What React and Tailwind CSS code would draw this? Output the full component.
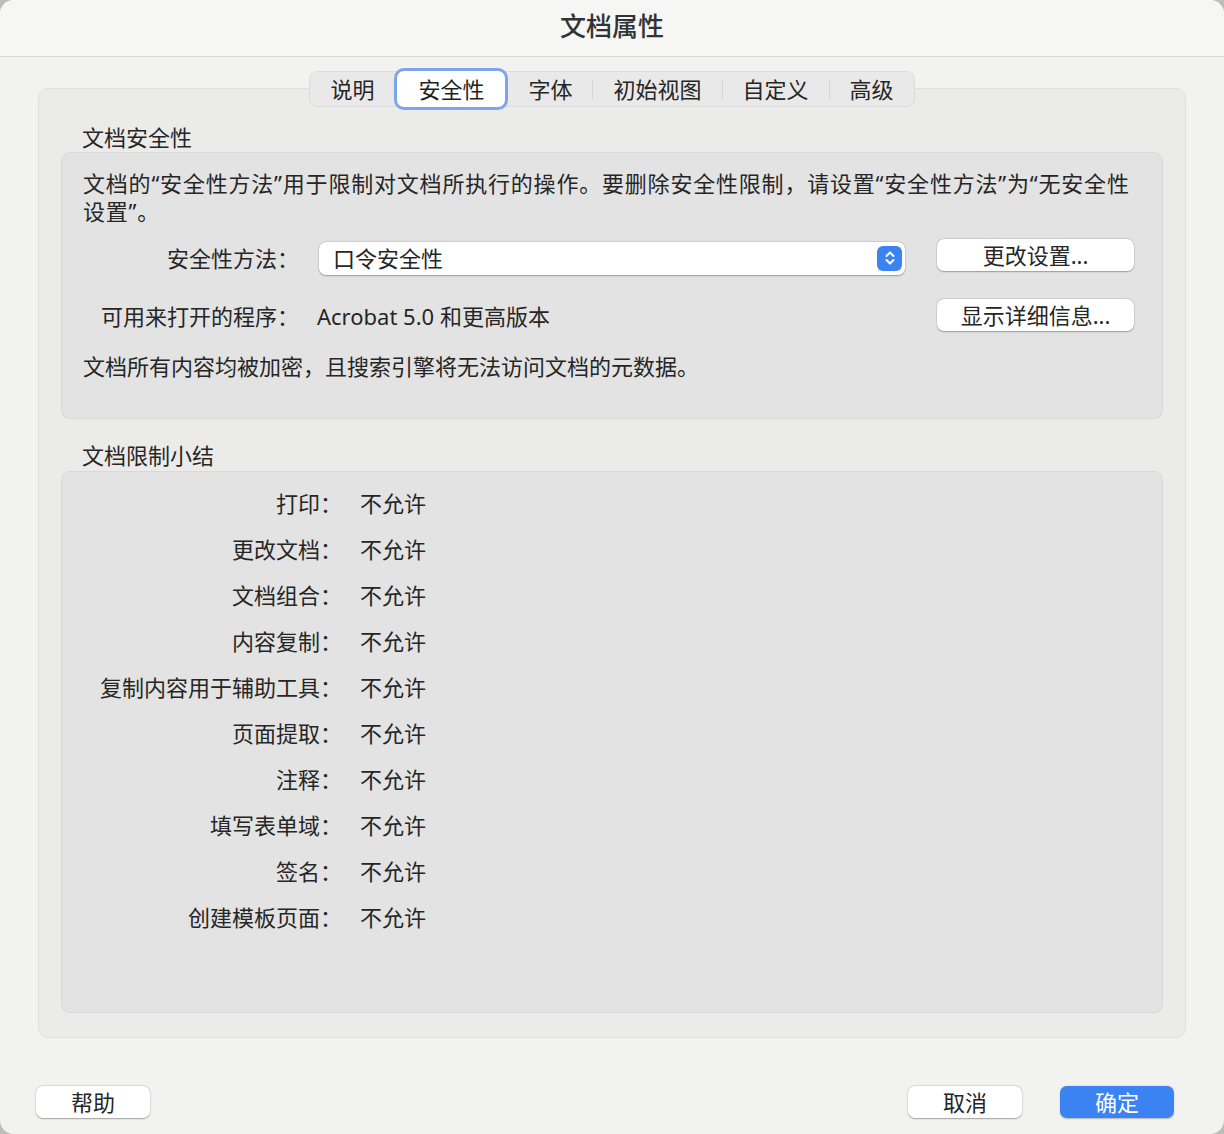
import { useState } from 'react'

const tabs = ['说明', '安全性', '字体', '初始视图', '自定义', '高级']

const restrictions = [
  '打印',
  '更改文档',
  '文档组合',
  '内容复制',
  '复制内容用于辅助工具',
  '页面提取',
  '注释',
  '填写表单域',
  '签名',
  '创建模板页面',
]

// plain mac-style push button
const PushButton = ({ children, className = '' }) => (
  <button
    className={`h-[32px] rounded-[7px] bg-white text-[22px] leading-none text-[#262626] shadow-[0_0.5px_1.5px_rgba(0,0,0,0.3),0_0_0_0.5px_rgba(0,0,0,0.08)] ${className}`}
  >
    {children}
  </button>
)

function App() {
  const [active, setActive] = useState(1)

  return (
    <div
      className="w-[1224px] h-[1134px] bg-[#bdbdbd] text-[#262626]"
      style={{ fontFamily: '"Noto Sans", "Noto Sans CJK SC", sans-serif' }}
    >
      <div className="w-full h-full rounded-[14px] overflow-hidden bg-[#f2f2f1] flex flex-col">
        {/* title bar */}
        <div className="h-[57px] shrink-0 flex items-center justify-center bg-[#f6f6f4] border-b border-[#d9d9d7]">
          <span className="text-[26px] font-medium text-[#333333] -mt-[3px]">文档属性</span>
        </div>

        <div className="px-[38px] pt-[14px] flex flex-col">
          {/* tab strip */}
          <div className="relative z-10 flex justify-center">
            <div className="flex items-center h-[36px] rounded-[8px] bg-[#e9e9e9] border border-[#dcdcdc]">
              {tabs.map((t, i) => {
                const selected = i === active
                const showSep = i > 0 && i !== active && i - 1 !== active
                return (
                  <div key={t} className="flex items-center">
                    {showSep && <div className="w-px h-[20px] bg-[#d4d4d4]" />}
                    <button
                      onClick={() => setActive(i)}
                      className={
                        selected
                          ? 'h-[42px] w-[114px] rounded-[10px] bg-white border-[3px] border-[#7ea5ec] text-[22px] leading-none text-[#1f1f1f]'
                          : 'h-[34px] px-[20px] text-[22px] leading-none text-[#262626]'
                      }
                    >
                      {t}
                    </button>
                  </div>
                )
              })}
            </div>
          </div>

          {/* main panel */}
          <div className="-mt-[19px] h-[950px] rounded-[10px] bg-[#ebebea] border border-[#e0e0df] px-[22px] pt-[34px]">
            <div className="text-[22px] leading-[28px] pl-[21px]">文档安全性</div>
            <div className="mt-[1px] h-[267px] rounded-[9px] bg-[#e3e3e3] border border-[#d9d9d9] pl-[21px] pr-[28px] pt-[16px]">
              <p className="text-[22px] leading-[28px] tracking-[0.8px]">
                文档的“安全性方法”用于限制对文档所执行的操作。要删除安全性限制，请设置“安全性方法”为“无安全性设置”。
              </p>
              <div className="flex items-center mt-[16px] h-[34px]">
                <div className="w-[257px] shrink-0 text-right pr-[20px] text-[22px] -ml-[21px]">安全性方法：</div>
                <div className="w-[586px] h-[33px] rounded-[7px] bg-white shadow-[0_0.5px_1.5px_rgba(0,0,0,0.3),0_0_0_0.5px_rgba(0,0,0,0.08)] flex items-center justify-between pl-[14px] pr-[3px]">
                  <span className="text-[22px] leading-none">口令安全性</span>
                  <span className="w-[25px] h-[25px] rounded-[6px] bg-[#3b82f2] flex items-center justify-center">
                    <svg width="12" height="16" viewBox="0 0 12 16" fill="none" stroke="white" strokeWidth="2" strokeLinecap="round" strokeLinejoin="round">
                      <path d="M2.5 6 L6 2.5 L9.5 6" />
                      <path d="M2.5 10 L6 13.5 L9.5 10" />
                    </svg>
                  </span>
                </div>
                <PushButton className="ml-auto mb-[6px] w-[197px]">更改设置...</PushButton>
              </div>
              <div className="flex items-center mt-[24px] h-[34px]">
                <div className="w-[257px] shrink-0 text-right pr-[20px] text-[22px] -ml-[21px]">可用来打开的程序：</div>
                <span className="text-[22px] -ml-[2px]">Acrobat 5.0 和更高版本</span>
                <PushButton className="ml-auto mb-[2px] w-[197px]">显示详细信息...</PushButton>
              </div>
              <p className="text-[22px] leading-[28px] mt-[19px]">
                文档所有内容均被加密，且搜索引擎将无法访问文档的元数据。
              </p>
            </div>

            <div className="text-[22px] leading-[28px] pl-[21px] mt-[22px]">文档限制小结</div>
            <div className="mt-[2px] h-[542px] rounded-[9px] bg-[#e3e3e3] border border-[#d9d9d9] pt-[8px]">
              {restrictions.map((r) => (
                <div key={r} className="flex items-center h-[46px] text-[22px]">
                  <div className="w-[280px] text-right">{r}：</div>
                  <div className="pl-[18px]">不允许</div>
                </div>
              ))}
            </div>
          </div>
        </div>

        {/* footer buttons */}
        <div className="mt-[48px] flex items-center pl-[36px] pr-[50px]">
          <PushButton className="w-[114px]">帮助</PushButton>
          <PushButton className="ml-auto w-[114px]">取消</PushButton>
          <button className="ml-[38px] w-[114px] h-[32px] rounded-[7px] bg-[#3b82f2] text-white text-[22px] leading-none shadow-[0_0.5px_1.5px_rgba(0,0,0,0.25)]">
            确定
          </button>
        </div>
      </div>
    </div>
  )
}

export default App
